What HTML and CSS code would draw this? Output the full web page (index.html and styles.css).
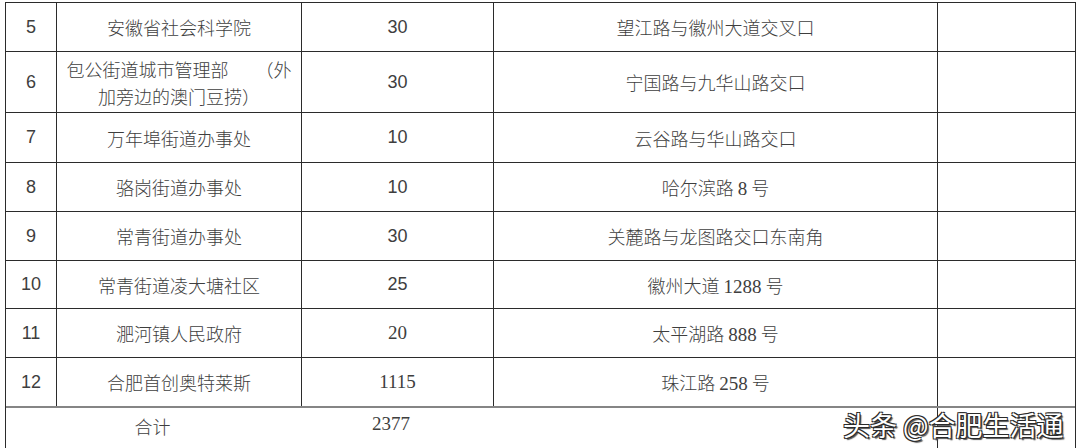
FILE: index.html
```html
<!DOCTYPE html>
<html lang="zh-CN">
<head>
<meta charset="utf-8">
<title>表格</title>
<link rel="stylesheet" href="styles.css">
</head>
<body>
<div class="sheet">
  <div class="row h48"><div class="c n">5</div><div class="c">安徽省社会科学院</div><div class="c n">30</div><div class="c">望江路与徽州大道交叉口</div><div class="c"></div></div>
  <div class="row h60"><div class="c n">6</div><div class="c two">包公街道城市管理部　　（外<br>加旁边的澳门豆捞）</div><div class="c n">30</div><div class="c">宁国路与九华山路交口</div><div class="c"></div></div>
  <div class="row h49"><div class="c n">7</div><div class="c">万年埠街道办事处</div><div class="c n">10</div><div class="c">云谷路与华山路交口</div><div class="c"></div></div>
  <div class="row h48"><div class="c n">8</div><div class="c">骆岗街道办事处</div><div class="c n">10</div><div class="c"><span>哈尔滨路 <span class="s">8</span> 号</span></div><div class="c"></div></div>
  <div class="row h48"><div class="c n">9</div><div class="c">常青街道办事处</div><div class="c n">30</div><div class="c">关麓路与龙图路交口东南角</div><div class="c"></div></div>
  <div class="row h47"><div class="c n">10</div><div class="c">常青街道凌大塘社区</div><div class="c n">25</div><div class="c"><span>徽州大道 <span class="s">1288</span> 号</span></div><div class="c"></div></div>
  <div class="row h48"><div class="c n">11</div><div class="c">淝河镇人民政府</div><div class="c s">20</div><div class="c"><span>太平湖路 <span class="s">888</span> 号</span></div><div class="c"></div></div>
  <div class="row h48"><div class="c n">12</div><div class="c">合肥首创奥特莱斯</div><div class="c s">1115</div><div class="c"><span>珠江路 <span class="s">258</span> 号</span></div><div class="c"></div></div>
  <div class="row total">
    <div class="c span"><span class="tl">合计</span><span class="tv s">2377</span></div>
    <div class="c"></div>
  </div>
</div>
<div class="wm">头条 @合肥生活通</div>
</body>
</html>
```

FILE: styles.css
```css
html, body {
  margin: 0;
  padding: 0;
  background: #ffffff;
}

body {
  width: 1080px;
  height: 448px;
  overflow: hidden;
  position: relative;
  font-family: "Noto Sans CJK SC", "Noto Sans", sans-serif;
  font-size: 18px;
  font-weight: 300;
  color: #3e3e3e;
}

.sheet {
  margin: 2px 0 0 5px;
  width: 1071px;
  box-sizing: border-box;
  padding: 1px 1px 0 1px;
  background: #2b2b2b;
  display: flex;
  flex-direction: column;
  gap: 1px;
}

.row {
  display: grid;
  grid-template-columns: 50px 244px 191px 443px 137px;
  column-gap: 1px;
}

.h47 { height: 47px; }
.h48 { height: 48px; }
.h49 { height: 49px; }
.h60 { height: 60px; }

.c {
  background: #ffffff;
  display: flex;
  align-items: center;
  justify-content: center;
  text-align: center;
  white-space: nowrap;
}

.two {
  line-height: 27px;
  padding-top: 2px;
  box-sizing: border-box;
}

.n {
  font-family: "Liberation Sans", Arial, sans-serif;
  font-weight: 400;
  font-size: 18px;
}

.s {
  font-family: "Liberation Serif", "Times New Roman", serif;
  font-weight: 400;
  font-size: 19px;
}

.total {
  grid-template-columns: 931px 137px;
  height: 60px;
  margin-top: -1px;
  border-top: 2px solid #858585;
}

.span {
  display: grid;
  grid-template-columns: 295px 192px 1fr;
  align-items: start;
  justify-items: center;
  padding-top: 5px;
}

.tl {
  grid-column: 1;
  margin-left: -2px;
}

.tv {
  grid-column: 2;
  margin-left: -12px;
}

.wm {
  position: absolute;
  left: 843px;
  top: 410px;
  font-family: "Noto Sans CJK SC", "Noto Sans", sans-serif;
  font-size: 27px;
  font-weight: 400;
  line-height: 30px;
  color: #ffffff;
  white-space: nowrap;
  text-shadow:
    1px 1px 0 #2a2a2a,
    -1px 1px 0 #2a2a2a,
    1px -1px 0 #2a2a2a,
    -1px -1px 0 #2a2a2a,
    2px 2px 1px #555555;
}
```
